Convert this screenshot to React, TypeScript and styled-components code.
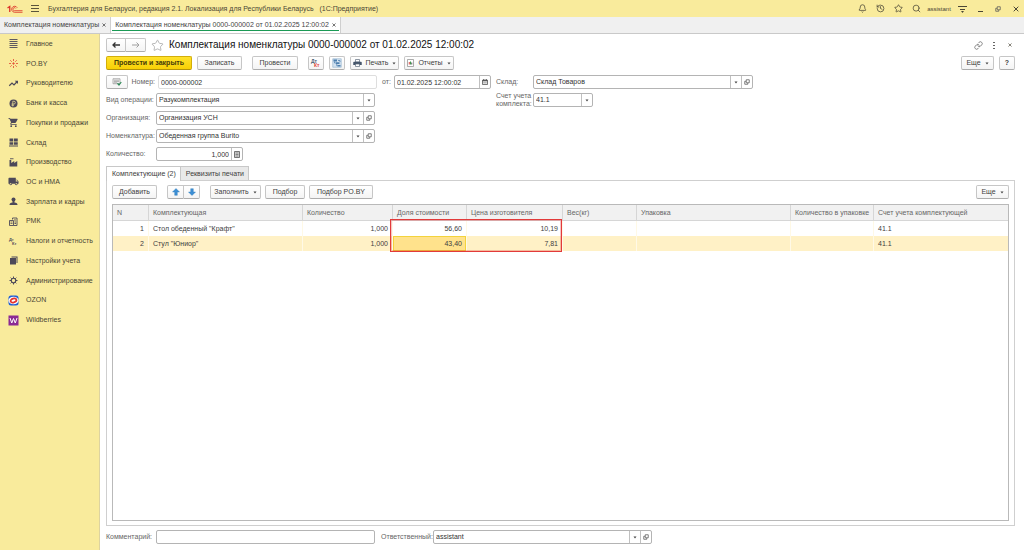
import React from "react";
import styled, { createGlobalStyle, css } from "styled-components";
import { MdShoppingCart, MdPerson, MdLocalShipping } from "react-icons/md";
import { Bell, History, Link, Search, Star } from "lucide-react";

const Global = createGlobalStyle`
  *, *::before, *::after { box-sizing: border-box; }
  body { margin: 0; background: #fff; }
  body, button, input, select {
    font-family: "Liberation Sans", Arial, sans-serif;
    font-size: 7px;
    line-height: 8px;
    color: #404040;
  }
  button { cursor: pointer; }
`;

const Page = styled.div`
  display: flex;
  flex-direction: column;
  min-height: 100vh;
`;

/* ---------- window header ---------- */

const TitleBar = styled.header`
  display: flex;
  align-items: center;
  gap: 6px;
  height: 17px;
  padding: 0 3px 0 7px;
  background: #f9eb9c;
`;

const AppTitle = styled.div`
  flex: 1;
  padding-left: 3px;
  color: #4a4636;
  white-space: pre;
`;

const TitleTools = styled.div`
  display: flex;
  align-items: center;
  gap: 5px;
`;

const PlainButton = styled.button<{ $w?: number }>`
  display: flex;
  flex: none;
  align-items: center;
  justify-content: center;
  width: ${(p) => p.$w ?? 10}px;
  height: 12px;
  padding: 0;
  border: 0;
  background: none;
  color: #4a4636;
  svg { flex: none; }
`;

const UserButton = styled(PlainButton)`
  font-size: 6px;
`;

const OpenTabs = styled.nav`
  display: flex;
  height: 17px;
  background: #f0f0f0;
  border-bottom: 1px solid #c9c9c9;
`;

const OpenTab = styled.div<{ $active?: boolean }>`
  display: flex;
  align-items: center;
  gap: 2px;
  padding: 0 3px 0 4px;
  border-right: 1px solid #cfcfcf;
  white-space: nowrap;
  ${(p) =>
    p.$active &&
    css`
      background: linear-gradient(#1a9a55, #1a9a55) 1px 13px / calc(100% - 2px) 1px no-repeat #fff;
    `}
`;

const TabLink = styled.a`
  color: #444;
  text-decoration: none;
`;

const TabClose = styled(PlainButton)`
  color: #333;
`;

/* ---------- side menu ---------- */

const Body = styled.div`
  display: flex;
  flex: 1;
`;

const Side = styled.nav`
  flex: 0 0 100px;
  background: #f9eb9c;
  border-right: 1px solid #ddd3a0;
`;

const SideList = styled.ul`
  display: grid;
  grid-template-rows: repeat(15, 1fr);
  height: 296px;
  margin: 0;
  padding: 0;
  list-style: none;
`;

const SideLink = styled.a`
  display: flex;
  align-items: center;
  gap: 7px;
  height: 100%;
  padding-left: 8px;
  color: #4a4636;
  text-decoration: none;
  white-space: nowrap;
  svg { flex: none; }
`;

/* ---------- document ---------- */

const Doc = styled.main`
  display: flex;
  flex: 1;
  flex-direction: column;
  min-width: 0;
  padding: 4px 9px 6px 6px;
`;

const Row = styled.div<{ $gap?: number }>`
  display: flex;
  align-items: center;
  gap: ${(p) => p.$gap ?? 5}px;
`;

const Spacer = styled.div`
  flex: 1;
`;

const Heading = styled.h1`
  margin: 0;
  font-size: 10px;
  font-weight: 400;
  line-height: 12px;
  color: #111;
  white-space: nowrap;
`;

const Button = styled.button<{ $w: number; $primary?: boolean }>`
  display: flex;
  align-items: center;
  justify-content: center;
  gap: 4px;
  width: ${(p) => p.$w}px;
  height: 14px;
  padding: 0;
  border: 1px solid #c6c6c6;
  border-bottom-color: #adadad;
  border-radius: 2px;
  background: linear-gradient(#fff, #f4f4f4);
  white-space: nowrap;
  ${(p) =>
    p.$primary &&
    css`
      border-color: #d3ae0a;
      border-bottom-color: #b3930a;
      background: linear-gradient(#ffe22b, #f8d005);
      color: #463c08;
      font-weight: 700;
    `}
`;

const Joined = styled.div`
  display: flex;
  > button:first-child { border-radius: 2px 0 0 2px; }
  > button:last-child { border-radius: 0 2px 2px 0; border-left: 0; }
`;

const Commands = styled(Row)`
  margin-top: 4px;
`;

const Form = styled.div`
  display: grid;
  grid-template-columns: 276px 114px 1fr;
  grid-auto-rows: 18px;
  align-items: center;
  margin-top: 3px;
`;

const WideCell = styled(Row)`
  grid-column: 1 / 3;
`;

const SideCell = styled(Row)`
  grid-column: 3;
`;

const Label = styled.label<{ $w: number; $right?: boolean }>`
  flex: 0 0 ${(p) => p.$w}px;
  color: #666;
  text-align: ${(p) => (p.$right ? "right" : "left")};
`;

const Field = styled.div<{ $w: number; $quiet?: boolean }>`
  display: flex;
  width: ${(p) => p.$w}px;
  height: 14px;
  border: 1px solid ${(p) => (p.$quiet ? "#dedede" : "#b4b4b4")};
  border-radius: 2px;
  background: #fff;
  overflow: hidden;
`;

const control = css`
  flex: 1;
  min-width: 0;
  height: 12px;
  margin: 0;
  padding: 0 2px;
  border: 0;
  outline: 0;
  background: none;
  color: #333;
`;

const Input = styled.input<{ $right?: boolean }>`
  ${control}
  text-align: ${(p) => (p.$right ? "right" : "left")};
`;

const Select = styled.select`
  ${control}
  appearance: none;
`;

const segment = css`
  display: flex;
  flex: 0 0 11px;
  align-items: center;
  justify-content: center;
  padding: 0;
  border: 0;
  border-left: 1px solid #c0c0c0;
  background: none;
  color: #555;
`;

const CaretCell = styled.span`
  ${segment}
`;

const FieldButton = styled.button`
  ${segment}
`;

/* ---------- tabbed part ---------- */

const TabStrip = styled.div`
  display: flex;
  margin-top: 3px;
  position: relative;
  z-index: 1;
`;

const PartTab = styled.button<{ $active?: boolean }>`
  height: ${(p) => (p.$active ? 15 : 14)}px;
  padding: 0 4px 0 5px;
  border: 1px solid #c8c8c8;
  border-bottom: 0;
  background: ${(p) => (p.$active ? "#fff" : "#e9e9e9")};
  white-space: nowrap;
  & + & { border-left: 0; }
`;

const Panel = styled.section`
  display: flex;
  flex: 1;
  flex-direction: column;
  margin-top: -1px;
  padding: 4px 5px;
  border: 1px solid #cfcfcf;
`;

const TableFrame = styled.div`
  position: relative;
  flex: 1;
  margin-top: 5px;
  border: 1px solid #b9b9b9;
`;

const Table = styled.table`
  width: 100%;
  border-collapse: separate;
  border-spacing: 0;
  table-layout: fixed;
`;

const Th = styled.th`
  height: 16px;
  padding: 0 4px;
  border-left: 1px solid #d6d6d6;
  border-bottom: 1px solid #d6d6d6;
  background: #f1f1f1;
  color: #666;
  font-weight: 400;
  text-align: left;
  white-space: nowrap;
  &:first-child { border-left: 0; }
`;

const Tr = styled.tr<{ $selected?: boolean }>`
  background: ${(p) => (p.$selected ? "#fff1c6" : "#fff")};
`;

const Td = styled.td<{ $right?: boolean; $current?: boolean }>`
  height: 15px;
  padding: 0 4px;
  border-left: 1px solid #fff9e6;
  text-align: ${(p) => (p.$right ? "right" : "left")};
  white-space: nowrap;
  &:first-child { border-left: 0; }
  ${(p) =>
    p.$current &&
    css`
      background: #ffe28c;
      box-shadow: inset 0 0 0 1px #f3d33c;
    `}
`;

const Marker = styled.div`
  position: absolute;
  top: 14px;
  left: 277px;
  width: 172px;
  height: 33px;
  border: 1px solid #e23a3a;
  outline: 1px solid rgba(226, 58, 58, 0.3);
  outline-offset: -2px;
  pointer-events: none;
`;

const Footer = styled(Row)`
  margin-top: 4px;
`;

/* ---------- icons ---------- */

const Logo = () => (
  <svg width="16" height="10" viewBox="0 0 32 20" fill="none" stroke="#dc3227">
    <path d="M1 8 5.500 5v11" strokeWidth="2.600" />
    <path d="M20.500 7.500A6 6 0 1 0 15 16.500h16" strokeWidth="1.700" />
    <path d="M17.600 9A3 3 0 1 0 15 13.300h16" strokeWidth="1.500" />
  </svg>
);

const Menu = () => (
  <svg width="9" height="9" viewBox="0 0 9 9" stroke="#5a543c" fill="none">
    <path d="M1 1.500h8M1 4.500h8M1 7.500h8" />
  </svg>
);

const Cross = ({ size = 5 }: { size?: number }) => (
  <svg width={size} height={size} viewBox="0 0 6 6" stroke="currentColor" fill="none">
    <path d="M.7.7l4.600 4.600M5.300.7.7 5.300" />
  </svg>
);

const Caret = () => (
  <svg width="4" height="3" viewBox="0 0 4 3" fill="#444">
    <path d="M.5.5h3L2 2.500z" />
  </svg>
);

const Open = () => (
  <svg width="6" height="6" viewBox="0 0 12 12" fill="none" stroke="#555" strokeWidth="1.500">
    <path d="M4.500 1.500h6v6h-6zM4 4.500H1.500v6h6V8" />
  </svg>
);

const Calc = () => (
  <svg width="6" height="7" viewBox="0 0 12 14">
    <path d="M1 1h10v12H1z" fill="#ddd" stroke="#555" strokeWidth="1.600" />
    <path d="M3 4h6M3 7h6M3 10h6" stroke="#555" strokeWidth="1.300" />
  </svg>
);

const Calendar = () => (
  <svg width="6" height="6" viewBox="0 0 12 12">
    <path d="M1 2.500h10v8.500H1z" fill="#eee" stroke="#444" strokeWidth="1.400" />
    <path d="M1 3.500h10M3.500 0v3M8.500 0v3" stroke="#444" strokeWidth="1.800" />
    <path d="M3 7.500h6" stroke="#555" strokeDasharray="1.500 .7" strokeWidth="1.500" />
  </svg>
);

const Arrow = ({ back }: { back?: boolean }) => (
  <svg width="8" height="6" viewBox="0 0 8 6" fill="none" stroke={back ? "#333" : "#a0a0a0"} strokeWidth={back ? 1.3 : 1}>
    <path d={back ? "M8 3H1M3.500.5 1 3l2.500 2.500" : "M0 3h7M4.500.5 7 3 4.500 5.500"} />
  </svg>
);

const BlueArrow = ({ down }: { down?: boolean }) => (
  <svg width="8" height="8" viewBox="0 0 8 8" fill="#3d8fd4" stroke="#2c78bb" strokeWidth=".4">
    <path d={down ? "M2.700.7h2.600v3.300h2.200L4 7.500.5 4h2.200z" : "M2.700 7.300h2.600V4h2.200L4 .5.5 4h2.200z"} />
  </svg>
);

const DtKt = () => (
  <svg width="12" height="10" viewBox="0 0 12 10" fontFamily="Liberation Sans, sans-serif" fontWeight="700">
    <text x="1" y="5" fontSize="5" fill="#4a6076">Дт</text>
    <text x="4" y="9" fontSize="5" fill="#e2443a">Кт</text>
  </svg>
);

const Structure = () => (
  <svg width="10" height="10" viewBox="0 0 20 20" fill="none">
    <path d="M1.500 1.500h17v17h-17z" fill="#d3e2f0" stroke="#8fb0cd" strokeWidth="1.200" />
    <path d="M3 3h7v4H3zM8 8.500h7v3.500H8zM11 14h6v3h-6z" fill="#4d7fae" />
    <path d="M5 7v3h3M9.500 12v3.500H11M12 5h4v3" stroke="#4d7fae" strokeWidth="1.500" />
  </svg>
);

const Printer = () => (
  <svg width="9" height="8" viewBox="0 0 18 16">
    <path d="M5 1h8v5H5z" fill="#fff" stroke="#5d6b7d" strokeWidth="1.400" />
    <path d="M2 5.500h14a1.500 1.500 0 0 1 1.500 1.500v5h-17V7A1.500 1.500 0 0 1 2 5.500z" fill="#46566b" />
    <path d="M5 10h8v5H5z" fill="#fff" stroke="#5d6b7d" strokeWidth="1.400" />
  </svg>
);

const Report = () => (
  <svg width="7" height="8" viewBox="0 0 14 16">
    <path d="M1 1h12v14H1z" fill="#fff" stroke="#888" strokeWidth="1.400" />
    <path d="M4.500 6v5" stroke="#d9463c" strokeWidth="2" />
    <path d="M7 5v6" stroke="#3f9a4d" strokeWidth="2" />
    <path d="M9.500 7v4" stroke="#555" strokeWidth="2" />
  </svg>
);

const ListCheck = () => (
  <svg width="10" height="8" viewBox="0 0 20 16" fill="none">
    <path d="M2 1.500h14v10H2z" fill="#f2f2f2" stroke="#8b8b8b" strokeWidth="1.300" />
    <path d="M4 4.500h10M4 7h10M4 9.500h6" stroke="#8b8b8b" strokeWidth="1.200" />
    <path d="m11 10.500 3 3.500 4.500-6" stroke="#2c8a55" strokeWidth="2.400" />
  </svg>
);

const Filter = () => (
  <svg width="9" height="8" viewBox="0 0 9 8" stroke="currentColor" fill="none">
    <path d="M0 1.500h9M2 4.500h5" />
    <path d="M3 6h3L4.500 8z" fill="currentColor" stroke="none" />
  </svg>
);

const Minimize = () => (
  <svg width="5" height="6" viewBox="0 0 5 6" stroke="currentColor">
    <path d="M0 5.500h5" />
  </svg>
);

const Dots = () => (
  <svg width="2" height="7" viewBox="0 0 2 7" fill="#666">
    <path d="M0 0h2v1H0zM0 3h2v1H0zM0 6h2v1H0z" />
  </svg>
);

const ink = "#4d4959";
const Glyph = ({ children }: { children: React.ReactNode }) => (
  <svg width="11" height="11" viewBox="0 0 22 22" fill="none" stroke={ink} strokeWidth="2">
    {children}
  </svg>
);

const sideItems: { label: string; icon: React.ReactNode }[] = [
  { label: "Главное", icon: <Glyph><path d="M3 3h16M3 7h16M3 11h16M3 15h16M3 19h16" strokeWidth="1.800" /></Glyph> },
  {
    label: "PO.BY",
    icon: (
      <Glyph>
        <g stroke="#e5533d" strokeWidth="1.800">
          <path d="M11 2v4M11 16v4M2 11h4M16 11h4M4.500 4.500l3 3M14.500 14.500l3 3M4.500 17.500l3-3M14.500 7.500l3-3" />
          <circle cx="11" cy="11" r="1.500" fill="#e5533d" />
        </g>
      </Glyph>
    ),
  },
  {
    label: "Руководителю",
    icon: (
      <Glyph>
        <path d="M2.500 15.500 8 10l4 4 6-6.500" strokeWidth="2.400" />
        <path d="M13.500 5.500H20V12z" fill={ink} stroke="none" />
      </Glyph>
    ),
  },
  {
    label: "Банк и касса",
    icon: (
      <Glyph>
        <circle cx="11" cy="11" r="8" fill={ink} stroke="none" />
        <path d="M9.500 17V6.500H12a2.600 2.600 0 0 1 0 5.500H7M7 14.500h5" stroke="#f9eb9c" strokeWidth="1.300" />
      </Glyph>
    ),
  },
  { label: "Покупки и продажи", icon: <MdShoppingCart size={11} color={ink} /> },
  {
    label: "Склад",
    icon: (
      <Glyph>
        <path d="M3 3h7.500v6H3zM12 3h7.500v6H12zM3 10.500h7.500v5H3zM12 10.500h7.500v5H12zM2 17h18v2H2z" fill={ink} stroke="none" />
      </Glyph>
    ),
  },
  {
    label: "Производство",
    icon: (
      <Glyph>
        <path d="M3 19V6h3.500v6l6-4v4l6-4v11z" fill={ink} stroke="none" />
        <path d="M4 3.500h7" strokeWidth="1.800" />
      </Glyph>
    ),
  },
  { label: "ОС и НМА", icon: <MdLocalShipping size={11} color={ink} /> },
  {
    label: "Зарплата и кадры",
    icon: (
      <Glyph>
        <circle cx="11" cy="7" r="4" fill={ink} stroke="none" />
        <path d="M9 9h4v4c4 .5 6 1.500 6 5H3c0-3.500 2-4.500 6-5z" fill={ink} stroke="none" />
      </Glyph>
    ),
  },
  {
    label: "РМК",
    icon: (
      <Glyph>
        <path d="M3 9h8v10H3z" strokeWidth="1.800" />
        <path d="M5 12h4M5 15h4" strokeWidth="1.500" />
        <path d="M9 7V4h9v15h-7M12 8h4M13 12h3M13 15h3" strokeWidth="1.800" />
      </Glyph>
    ),
  },
  {
    label: "Налоги и отчетность",
    icon: (
      <svg width="11" height="11" viewBox="0 0 11 11" fill={ink} fontFamily="Liberation Sans, sans-serif" fontWeight="700">
        <text x="1" y="5" fontSize="4">Дт</text>
        <text x="4" y="9" fontSize="4">Кт</text>
      </svg>
    ),
  },
  {
    label: "Настройки учета",
    icon: (
      <Glyph>
        <path d="M7 3h12v13h-2v-11H7z" fill={ink} stroke="none" />
        <path d="M4 6h12v13H4z" fill={ink} stroke="none" />
      </Glyph>
    ),
  },
  {
    label: "Администрирование",
    icon: (
      <Glyph>
        <circle cx="11" cy="11" r="4.500" strokeWidth="2.400" />
        <path d="M11 3v3M11 16v3M3 11h3M16 11h3M5.300 5.300l2.200 2.200M14.500 14.500l2.200 2.200M5.300 16.700l2.200-2.200M14.500 7.500l2.200-2.200" />
      </Glyph>
    ),
  },
  {
    label: "OZON",
    icon: (
      <svg width="11" height="11" viewBox="0 0 22 22">
        <rect x="1" y="1" width="20" height="20" rx="5" fill="#1f5fd6" />
        <ellipse cx="11" cy="11" rx="10" ry="7.500" fill="#fff" />
        <ellipse cx="11" cy="11" rx="6" ry="3.800" fill="none" stroke="#e3342f" strokeWidth="3.600" transform="rotate(-15 11 11)" />
      </svg>
    ),
  },
  {
    label: "Wildberries",
    icon: (
      <svg width="11" height="11" viewBox="0 0 22 22">
        <rect x="1" y="1" width="20" height="20" fill="#8b2a94" />
        <path d="m4 6 3.500 10L11 7l3.500 9L18 6" fill="none" stroke="#fff" strokeWidth="2" />
      </svg>
    ),
  },
];

const columns: { title: string; width?: number }[] = [
  { title: "N", width: 35 },
  { title: "Комплектующая", width: 154 },
  { title: "Количество", width: 90 },
  { title: "Доля стоимости", width: 74 },
  { title: "Цена изготовителя", width: 96 },
  { title: "Вес(кг)", width: 74 },
  { title: "Упаковка", width: 154 },
  { title: "Количество в упаковке", width: 83 },
  { title: "Счет учета комплектующей" },
];

const rows = [
  ["1", "Стол обеденный \"Крафт\"", "1,000", "56,60", "10,19", "", "", "", "41.1"],
  ["2", "Стул \"Юниор\"", "1,000", "43,40", "7,81", "", "", "", "41.1"],
];
const rightAligned = [0, 2, 3, 4];

type PickProps = { id: string; value: string; w: number; open?: boolean };

const Pick = ({ id, value, w, open }: PickProps) => (
  <Field $w={w}>
    <Select id={id} defaultValue={value}>
      <option>{value}</option>
    </Select>
    <CaretCell aria-hidden><Caret /></CaretCell>
    {open && <FieldButton aria-label="Открыть"><Open /></FieldButton>}
  </Field>
);

export default function App() {
  return (
    <Page>
      <Global />
      <TitleBar>
        <Logo />
        <PlainButton aria-label="Меню"><Menu /></PlainButton>
        <AppTitle>{"Бухгалтерия для Беларуси, редакция 2.1. Локализация для Республики Беларусь   (1С:Предприятие)"}</AppTitle>
        <TitleTools>
          <Row $gap={8}>
            <PlainButton aria-label="Уведомления"><Bell size={9} /></PlainButton>
            <PlainButton aria-label="История"><History size={9} /></PlainButton>
            <PlainButton aria-label="Избранное"><Star size={9} /></PlainButton>
            <PlainButton aria-label="Поиск"><Search size={9} /></PlainButton>
          </Row>
          <UserButton $w={26}>assistant</UserButton>
          <Row $gap={8}>
            <PlainButton aria-label="Настройки"><Filter /></PlainButton>
            <PlainButton aria-label="Свернуть"><Minimize /></PlainButton>
            <PlainButton aria-label="Развернуть"><Open /></PlainButton>
            <PlainButton aria-label="Закрыть"><Cross size={6} /></PlainButton>
          </Row>
        </TitleTools>
      </TitleBar>

      <OpenTabs>
        <OpenTab>
          <TabLink href="#list">Комплектация номенклатуры</TabLink>
          <TabClose $w={6} aria-label="Закрыть вкладку"><Cross size={4} /></TabClose>
        </OpenTab>
        <OpenTab $active>
          <TabLink href="#doc">Комплектация номенклатуры 0000-000002 от 01.02.2025 12:00:02</TabLink>
          <TabClose $w={6} aria-label="Закрыть вкладку"><Cross size={4} /></TabClose>
        </OpenTab>
      </OpenTabs>

      <Body>
        <Side>
          <SideList>
            {sideItems.map((item) => (
              <li key={item.label}>
                <SideLink href="#section">{item.icon}{item.label}</SideLink>
              </li>
            ))}
          </SideList>
        </Side>

        <Doc>
          <Row>
            <Joined>
              <Button $w={20} aria-label="Назад"><Arrow back /></Button>
              <Button $w={20} aria-label="Вперед"><Arrow /></Button>
            </Joined>
            <PlainButton $w={13} aria-label="В избранное">
              <Star size={13} color="#a8a8a8" strokeWidth={1.5} />
            </PlainButton>
            <Heading>Комплектация номенклатуры 0000-000002 от 01.02.2025 12:00:02</Heading>
            <Spacer />
            <Row $gap={6}>
              <PlainButton aria-label="Ссылка"><Link size={9} color="#666" /></PlainButton>
              <PlainButton aria-label="Действия"><Dots /></PlainButton>
              <PlainButton aria-label="Закрыть"><Cross size={4} /></PlainButton>
            </Row>
          </Row>

          <Commands $gap={10}>
            <Row>
              <Button $w={86} $primary>Провести и закрыть</Button>
              <Button $w={45}>Записать</Button>
            </Row>
            <Button $w={46}>Провести</Button>
            <Row>
              <Button $w={16} aria-label="Проводки"><DtKt /></Button>
              <Button $w={16} aria-label="Структура подчиненности"><Structure /></Button>
              <Button $w={49}><Printer />Печать<Caret /></Button>
              <Button $w={50}><Report />Отчеты<Caret /></Button>
            </Row>
            <Spacer />
            <Row>
              <Button $w={33}>Еще<Caret /></Button>
              <Button $w={16}><b>?</b></Button>
            </Row>
          </Commands>

          <Form>
            <Row $gap={3}>
              <Button $w={22} aria-label="Проверить"><ListCheck /></Button>
              <Label $w={24} $right htmlFor="number">Номер:</Label>
              <Field $w={219} $quiet><Input id="number" defaultValue="0000-000002" readOnly /></Field>
            </Row>
            <Row $gap={3}>
              <Label $w={9} htmlFor="date">от:</Label>
              <Field $w={97}>
                <Input id="date" defaultValue="01.02.2025 12:00:02" />
                <FieldButton aria-label="Календарь"><Calendar /></FieldButton>
              </Field>
            </Row>
            <SideCell $gap={0}>
              <Label $w={37} htmlFor="store">Склад:</Label>
              <Pick id="store" value="Склад Товаров" w={220} open />
            </SideCell>

            <WideCell $gap={0}>
              <Label $w={50} htmlFor="kind">Вид операции:</Label>
              <Pick id="kind" value="Разукомплектация" w={219} />
            </WideCell>
            <SideCell $gap={0}>
              <Label $w={37} htmlFor="account">Счет учета<br />комплекта:</Label>
              <Pick id="account" value="41.1" w={60} />
            </SideCell>

            <WideCell $gap={0}>
              <Label $w={50} htmlFor="org">Организация:</Label>
              <Pick id="org" value="Организация УСН" w={219} open />
            </WideCell>
            <WideCell $gap={0}>
              <Label $w={50} htmlFor="item">Номенклатура:</Label>
              <Pick id="item" value="Обеденная группа Burito" w={219} open />
            </WideCell>
            <WideCell $gap={0}>
              <Label $w={50} htmlFor="qty">Количество:</Label>
              <Field $w={87}>
                <Input id="qty" defaultValue="1,000" $right />
                <FieldButton aria-label="Калькулятор"><Calc /></FieldButton>
              </Field>
            </WideCell>
          </Form>

          <TabStrip role="tablist">
            <PartTab role="tab" aria-selected $active>Комплектующие (2)</PartTab>
            <PartTab role="tab" aria-selected={false}>Реквизиты печати</PartTab>
          </TabStrip>
          <Panel>
            <Row $gap={10}>
              <Button $w={45}>Добавить</Button>
              <Joined>
                <Button $w={17} aria-label="Вверх"><BlueArrow /></Button>
                <Button $w={16} aria-label="Вниз"><BlueArrow down /></Button>
              </Joined>
              <Row $gap={4}>
                <Button $w={51}>Заполнить<Caret /></Button>
                <Button $w={40}>Подбор</Button>
                <Button $w={64}>Подбор PO.BY</Button>
              </Row>
              <Spacer />
              <Button $w={33}>Еще<Caret /></Button>
            </Row>
            <TableFrame>
              <Table>
                <colgroup>
                  {columns.map((c) => <col key={c.title} width={c.width} />)}
                </colgroup>
                <thead>
                  <tr>{columns.map((c) => <Th key={c.title} scope="col">{c.title}</Th>)}</tr>
                </thead>
                <tbody>
                  {rows.map((row, r) => (
                    <Tr key={row[0]} $selected={r === 1}>
                      {row.map((cell, c) => (
                        <Td key={c} $right={rightAligned.includes(c)} $current={r === 1 && c === 3}>{cell}</Td>
                      ))}
                    </Tr>
                  ))}
                </tbody>
              </Table>
              <Marker />
            </TableFrame>
          </Panel>

          <Footer $gap={6}>
            <Row $gap={0}>
              <Label $w={50} htmlFor="comment">Комментарий:</Label>
              <Field $w={219}><Input id="comment" /></Field>
            </Row>
            <Row $gap={0}>
              <Label $w={52} htmlFor="owner">Ответственный:</Label>
              <Pick id="owner" value="assistant" w={219} open />
            </Row>
          </Footer>
        </Doc>
      </Body>
    </Page>
  );
}
